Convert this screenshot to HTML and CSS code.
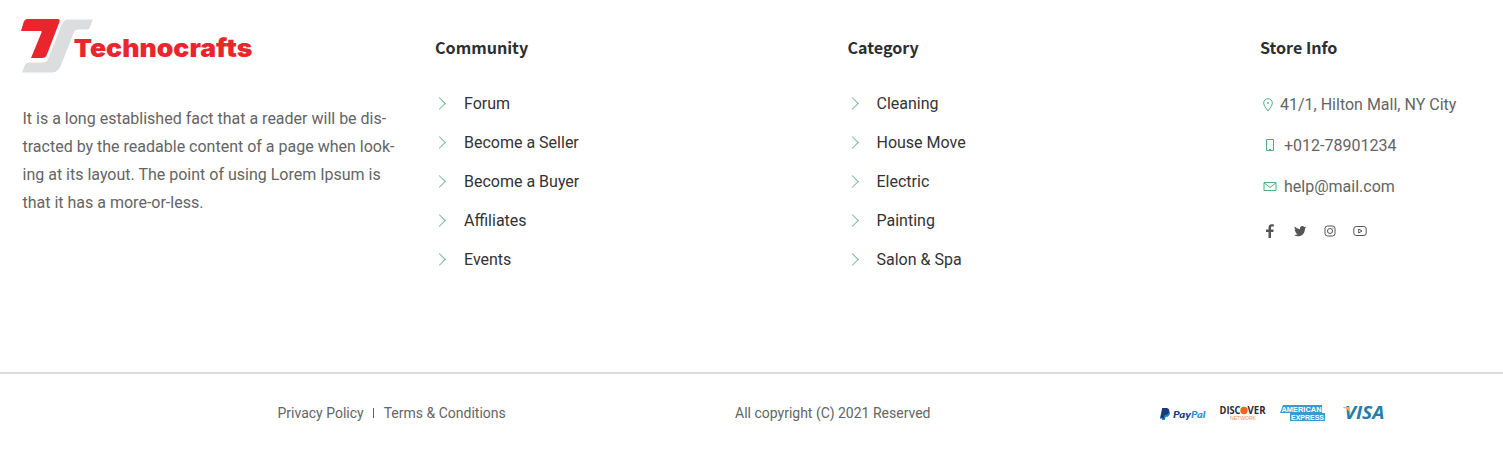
FILE: index.html
```html
<!DOCTYPE html>
<html lang="en">
<head>
<meta charset="utf-8">
<title>Technocrafts</title>
<link rel="stylesheet" href="styles.css">
</head>
<body>
<footer class="footer">
  <div class="columns">
    <section class="about">
      <svg class="logo" width="240" height="60" viewBox="15 15 240 60" role="img" aria-label="Technocrafts">
        <path fill="#dcddde" d="M68.500 19.500H92.700L90 27Q89.200 29.500 86.500 29.500H78Q75 29.500 74 32L61.500 64Q58.500 72.500 52 72.500H22L24.500 66Q25.700 62.500 29 62.500H43Q46.500 62.500 48 59L61.500 25Q63.800 19.500 68.500 19.500Z"/>
        <path fill="#e9252d" d="M27.500 19H57.500Q60.500 19 59.400 22L47 54.500Q45.800 58 42 58H31L41.500 32.500Q42.300 31 40.800 31H21L23.500 22.500Q24.700 19 27.500 19Z"/>
        <text class="logo-text" x="73.800" y="57" textLength="178.500" lengthAdjust="spacingAndGlyphs">Technocrafts</text>
      </svg>
      <p class="description">It is a long established fact that a reader will be dis-<br>tracted by the readable content of a page when look-<br>ing at its layout. The point of using Lorem Ipsum is<br>that it has a more-or-less.</p>
    </section>
    <nav class="column">
      <h2 class="heading">Community</h2>
      <ul class="links">
        <li>Forum</li><li>Become a Seller</li><li>Become a Buyer</li><li>Affiliates</li><li>Events</li>
      </ul>
    </nav>
    <nav class="column">
      <h2 class="heading">Category</h2>
      <ul class="links">
        <li>Cleaning</li><li>House Move</li><li>Electric</li><li>Painting</li><li>Salon &amp; Spa</li>
      </ul>
    </nav>
    <section class="column">
      <h2 class="heading">Store Info</h2>
      <ul class="contact">
        <li><svg width="16" height="16" viewBox="0 0 16 16"><path d="M8 14C6 11 3.700 8.700 3.700 6a4.300 4.300 0 0 1 8.600 0C12.300 8.700 10 11 8 14Z"/><circle cx="8" cy="6" r=".6"/></svg>41/1, Hilton Mall, NY City</li>
        <li><svg width="20" height="16" viewBox="0 0 20 16"><path d="M6.500 1.500h7v11h-7zM9 11.500h2"/></svg>+012-78901234</li>
        <li><svg width="20" height="16" viewBox="0 0 20 16"><path d="M4 3.500h12v8H4zM4 3.800l6 4.700 6-4.700"/></svg>help@mail.com</li>
      </ul>
      <div class="social">
        <svg width="16" height="16" viewBox="0 0 16 16"><path class="solid" d="M6.500 15V9H4V6.500h2.500V4.800C6.500 2.400 7.700 1.300 9.800 1.300h2v2.300h-1.400C9.300 3.600 9 4.100 9 5v1.500h2.700L11.300 9H9v6Z"/></svg>
        <svg width="16" height="16" viewBox="0 0 16 16"><path class="solid" d="M14.200 4.200c-.4.200-.9.400-1.400.4.500-.3.900-.8 1.100-1.300-.5.300-1 .5-1.600.6a2.500 2.500 0 0 0-4.300 2.300C5.900 6.100 4.100 5.100 2.900 3.600c-.7 1.200-.3 2.700.8 3.400-.4 0-.8-.1-1.100-.3 0 1.200.8 2.200 2 2.500-.4.100-.8.100-1.100 0 .3 1 1.200 1.700 2.300 1.700-1.100.9-2.400 1.200-3.800 1.100 5 3.200 11 .1 11-6.600.5-.3.900-.7 1.200-1.200Z"/></svg>
        <svg width="16" height="16" viewBox="0 0 16 16"><rect x="3" y="3" width="10" height="10" rx="2.500"/><circle cx="8" cy="8" r="2.500"/><circle class="solid" cx="11" cy="5" r=".6"/></svg>
        <svg width="16" height="16" viewBox="0 0 16 16"><rect x="1.800" y="3.500" width="12.400" height="9" rx="2.400"/><path d="M6.700 6v4L10 8Z"/></svg>
      </div>
    </section>
  </div>
  <div class="bottom">
    <div class="legal"><span>Privacy Policy</span><span class="divider"></span><span>Terms &amp; Conditions</span></div>
    <div class="copyright">All copyright (C) 2021 Reserved</div>
    <div class="payments">
      <svg width="46" height="20" viewBox="0 0 46 20" role="img" aria-label="PayPal">
        <path fill="#1686c4" d="M4 7h5Q11 9 9 11.500 8 13 5.500 13L5 16H2Z"/>
        <path fill="#193b78" d="M2.200 4H7Q10.300 5 8.900 8.500 8 11 4.500 11L3.700 14.500H0Z"/>
        <text class="pay" fill="#193b78" x="13" y="13.500" textLength="18" lengthAdjust="spacingAndGlyphs">Pay</text>
        <text class="pay" fill="#2094cf" x="31" y="13.500" textLength="14.500" lengthAdjust="spacingAndGlyphs">Pal</text>
      </svg>
      <svg class="wide" width="46" height="20" viewBox="0 0 46 20" role="img" aria-label="Discover Network">
        <text class="discover" x="-.5" y="10" textLength="21" lengthAdjust="spacingAndGlyphs">DISC</text>
        <circle cx="24" cy="6.500" r="3.700" fill="#ed6524"/>
        <text class="discover" x="27.500" y="10" textLength="18" lengthAdjust="spacingAndGlyphs">VER</text>
        <text class="network" x="10" y="16" textLength="26" lengthAdjust="spacingAndGlyphs">NETWORK</text>
      </svg>
      <svg class="wide" width="46" height="20" viewBox="0 0 46 20" role="img" aria-label="American Express">
        <path fill="#389bd0" d="M3 1H42V9H45V17H10V9H0Z"/>
        <text class="amex" x="1.500" y="8" textLength="40" lengthAdjust="spacingAndGlyphs">AMERICAN</text>
        <text class="amex" x="11" y="16" textLength="33" lengthAdjust="spacingAndGlyphs">EXPRESS</text>
      </svg>
      <svg class="wide" width="46" height="20" viewBox="0 0 46 20" role="img" aria-label="Visa">
        <text class="visa" x="4.500" y="15" textLength="40" lengthAdjust="spacingAndGlyphs">VISA</text>
        <path fill="#e9b463" d="M3 3H8Q9.500 3 10 6L11 10Q8.500 5 3 3.500Z"/>
      </svg>
    </div>
  </div>
</footer>
</body>
</html>
```
FILE: styles.css
```css
* { box-sizing: border-box; }
body { margin: 0; background: #fff; color: #646464; font: 16px/28px Roboto, sans-serif; }
.footer { height: 450px; overflow: hidden; }
.columns { display: grid; grid-template-columns: 412.500px 412.500px 412.500px 1fr; height: 372px; padding-left: 22.500px; }
.about { padding-top: 15px; }
.logo { display: block; margin-left: -7.500px; }
.logo-text { font: 900 25px Inter, sans-serif; fill: #e9252d; }
.description { margin: 30px 0 0; white-space: nowrap; }
.column { padding-top: 33px; }
.heading { margin: 0; font: 700 16.100px/28px "Noto Sans CJK JP", sans-serif; color: #2c2e30; }
.links, .contact { margin: 0; padding: 0; list-style: none; }
.links { margin-top: 23px; color: #333; line-height: 39px; }
.links li { display: flex; align-items: center; }
.links li::before { content: ""; width: 8px; height: 8px; margin: 0 20px 0 0; border: solid #76b996; border-width: 1px 1px 0 0; transform: rotate(45deg); }
.contact { margin-top: 23px; line-height: 41px; }
.contact li { display: flex; align-items: center; white-space: nowrap; gap: 4px; }
.contact svg { fill: none; stroke: #4bb37b; stroke-width: 1; }
.social { display: flex; gap: 14px; margin: 16px 0 0 2px; }
.social svg { fill: none; stroke: #555; stroke-width: 1; }
.social .solid { fill: #555; stroke: none; }
.bottom { display: grid; grid-template-columns: 277.500px 457.500px 425px 1fr; align-items: center; height: 80px; border-top: 2px solid #dcdcdc; font-size: 14px; }
.legal { grid-column: 2; display: flex; align-items: center; }
.divider { width: 1px; height: 10px; margin: 0 10px 0 9px; background: #646464; }
.payments { display: flex; gap: 14px; padding-top: 2px; }
.wide { overflow: visible; }
.pay { font: italic 900 10px Lato, sans-serif; }
.discover { font: 700 10px "Open Sans", sans-serif; fill: #292b30; }
.network { font: 5.500px "Liberation Sans", sans-serif; fill: #e58a55; }
.amex { font: 700 8px "Liberation Sans", sans-serif; fill: #fff; }
.visa { font: italic 700 17px "Open Sans", sans-serif; fill: #237fa9; }
```
